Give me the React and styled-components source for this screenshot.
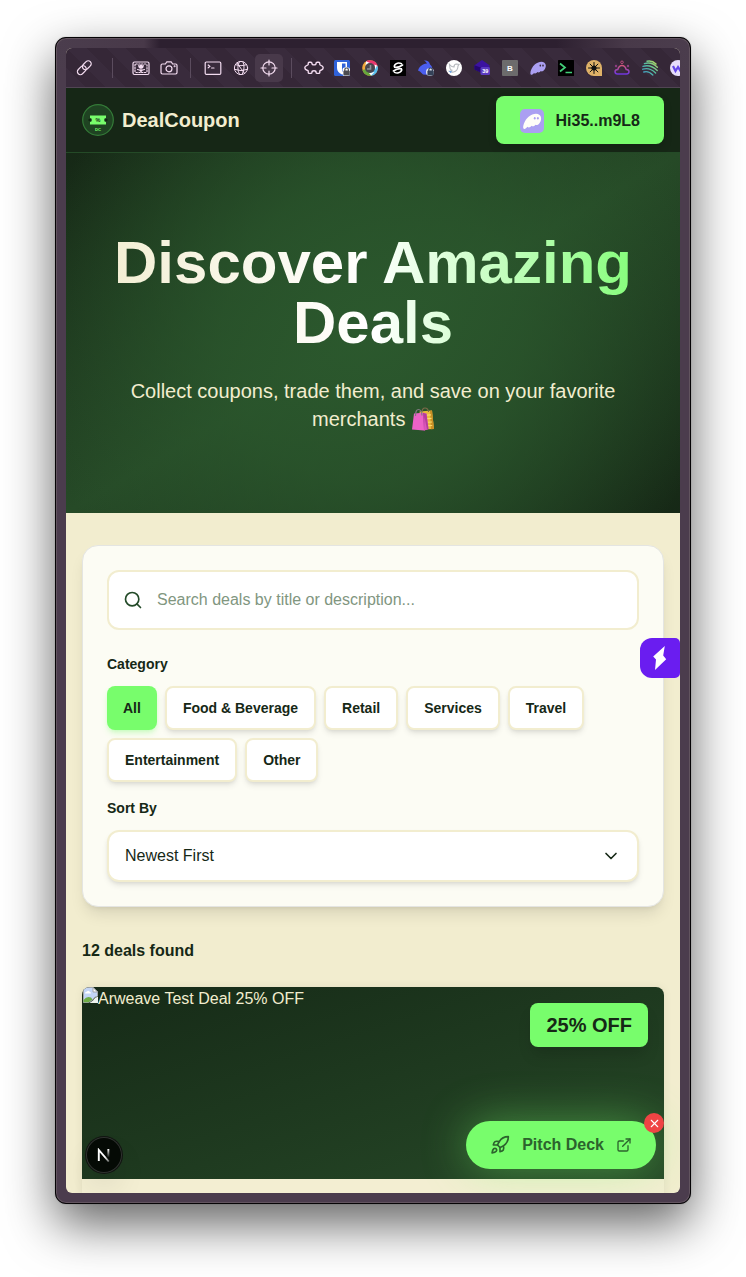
import React from "react";
import styled, { createGlobalStyle, css } from "styled-components";
import { Search, ChevronDown, Rocket, ExternalLink, X } from "lucide-react";

const GlobalStyle = createGlobalStyle`
  *, *::before, *::after { box-sizing: border-box; }
  html { background: #fff; }
  body {
    margin: 0;
    font-family: "Liberation Sans", Arial, Helvetica, sans-serif;
    font-size: 16px;
    line-height: 24px;
    color: #162816;
    overflow: hidden;
  }
  button, input { font: inherit; color: inherit; margin: 0; }
  svg { display: block; flex: none; }
`;

const Desktop = styled.main`
  height: 1277px;
  padding: 37px 55px;
  background: #fff;
  overflow: hidden;
`;

const Window = styled.div`
  width: 636px;
  height: 1167px;
  padding: 10px;
  border: 1px solid #050305;
  border-radius: 11px;
  background: linear-gradient(90deg, #4b3d4d 0, #483949 88px, #2d2030 104px, #2d2030 500px, #483949 570px, #4b3d4d 100%) 0 0 / 100% 30px no-repeat, #4b3c4d;
  box-shadow: inset 0 0 0 1px #62545f, 0 20px 50px rgba(0, 0, 0, 0.62), 0 0 1px rgba(0, 0, 0, 0.5);
  display: flex;
`;

const Viewport = styled.div`
  position: relative;
  flex: 1;
  display: flex;
  flex-direction: column;
  border-radius: 6px;
  overflow: hidden;
  background: #f2edcf;
`;

const Toolbar = styled.nav`
  flex: none;
  height: 40px;
  display: flex;
  align-items: center;
  padding-left: 4px;
  border-bottom: 1px solid #514554;
  background: repeating-linear-gradient(45deg, #392b3c 0 14px, #352737 14px 28px);
  color: #f3dcf0;
`;

const Tool = styled.div`
  flex: none;
  width: 28px;
  height: 28px;
  display: grid;
  place-items: center;
  border-radius: 5px;
  background: ${(p) => (p.$active ? "#48394a" : "transparent")};
`;

const ToolDivider = styled.i`
  flex: none;
  width: 1px;
  height: 20px;
  margin: 0 ${(p) => p.$after}px 0 ${(p) => p.$before}px;
  background: #5b4c5e;
`;

const Header = styled.header`
  flex: none;
  height: 65px;
  padding: 0 16px;
  display: flex;
  align-items: center;
  justify-content: space-between;
  background: #162716;
  border-bottom: 1px solid #244a27;
`;

const Brand = styled.div`
  display: flex;
  align-items: center;
  gap: 8px;
  font-size: 20px;
  line-height: 28px;
  font-weight: 700;
  color: #f2edcf;
`;

const WalletButton = styled.button`
  height: 48px;
  padding: 1px 24px 0;
  display: flex;
  align-items: center;
  gap: 12px;
  border: 0;
  border-radius: 8px;
  background: #78fd6c;
  color: #162816;
  font-weight: 700;
  white-space: nowrap;
  box-shadow: 0 4px 8px rgba(0, 0, 0, 0.15);
`;

const Hero = styled.section`
  flex: none;
  height: 360px;
  padding: 80px 16px;
  text-align: center;
  background:
    radial-gradient(circle at center, rgba(44, 90, 46, 0.9) 0, rgba(43, 88, 45, 0.72) 150px, rgba(42, 84, 43, 0) 345px),
    linear-gradient(to bottom right, #162816 0%, #264a27 50%, #162816 100%);
`;

const Title = styled.h1`
  margin: 0 0 24px;
  font-size: 60px;
  line-height: 60px;
  font-weight: 700;
  color: transparent;
  background: linear-gradient(90deg, #f2edcf, #ffffff 50%, #78fd6c);
  background-clip: text;
  -webkit-background-clip: text;
`;

const Lead = styled.p`
  margin: 0;
  font-size: 20px;
  line-height: 28px;
  color: #f2edcf;
`;

const NoBreak = styled.span`
  white-space: nowrap;
  svg { display: inline-block; vertical-align: -5px; margin: -4px -1px 0 0; }
`;

const Content = styled.section`
  flex: none;
  padding: 32px 16px 0;
`;

const FilterPanel = styled.section`
  height: 362px;
  padding: 24px;
  border: 1px solid #e4e5e2;
  border-radius: 16px;
  background: #fcfcf4;
  box-shadow: 0 10px 15px -3px rgba(0, 0, 0, 0.1), 0 4px 6px -4px rgba(0, 0, 0, 0.1);
`;

const fieldBox = css`
  display: flex;
  align-items: center;
  border: 2px solid #f2edcf;
  border-radius: 12px;
  background: #fff;
`;

const SearchField = styled.label`
  ${fieldBox}
  height: 60px;
  padding: 0 14px;
  gap: 14px;
  color: #234a28;
  margin-bottom: 24px;
`;

const SearchInput = styled.input`
  flex: 1;
  border: 0;
  outline: 0;
  padding: 0;
  background: transparent;
  &::placeholder { color: #81967f; opacity: 1; }
`;

const FieldLabel = styled.div`
  font-size: 14px;
  line-height: 20px;
  font-weight: 700;
  margin-bottom: 12px;
`;

const ChipRow = styled.div`
  display: flex;
  flex-wrap: wrap;
  gap: 8px;
  margin-bottom: 16px;
`;

const Chip = styled.button`
  height: 44px;
  padding: 0 16px;
  border: ${(p) => (p.$selected ? "0" : "2px solid #f2edcf")};
  border-radius: 8px;
  background: ${(p) => (p.$selected ? "#78fd6c" : "#fff")};
  color: #162816;
  font-size: 14px;
  line-height: 20px;
  font-weight: 700;
  white-space: nowrap;
  box-shadow: ${(p) =>
    p.$selected
      ? "0 4px 6px -1px rgba(120, 253, 108, 0.3), 0 2px 4px -2px rgba(120, 253, 108, 0.3)"
      : "0 4px 6px -1px rgba(0, 0, 0, 0.1), 0 2px 4px -2px rgba(0, 0, 0, 0.1)"};
`;

const SortSelect = styled.button`
  ${fieldBox}
  width: 100%;
  height: 52px;
  padding: 0 16px;
  justify-content: space-between;
  box-shadow: 0 4px 6px -1px rgba(0, 0, 0, 0.1), 0 2px 4px -2px rgba(0, 0, 0, 0.1);
`;

const ResultCount = styled.p`
  margin: 32px 0 24px;
  font-weight: 700;
`;

const DealCard = styled.article`
  height: 420px;
  border-radius: 8px;
  overflow: hidden;
  background: #f3eed2;
  box-shadow: 0 0 10px rgba(0, 0, 0, 0.07);
`;

const DealMedia = styled.div`
  position: relative;
  height: 192px;
  display: flex;
  align-items: flex-start;
  color: #f2edcf;
  background: linear-gradient(to bottom right, #162a17, #264827);
`;

const AltText = styled.span`
  line-height: 24px;
`;

const DiscountTag = styled.span`
  position: absolute;
  top: 16px;
  right: 16px;
  padding: 8px 16px;
  border-radius: 8px;
  background: #78fd6c;
  color: #162816;
  font-size: 20px;
  line-height: 28px;
  font-weight: 700;
  box-shadow: 0 10px 15px -3px rgba(0, 0, 0, 0.15);
`;

const SideTab = styled.button`
  position: absolute;
  right: 0;
  top: 590px;
  width: 40px;
  height: 40px;
  padding: 0;
  display: grid;
  place-items: center;
  border: 0;
  border-radius: 12px 5px 5px 12px;
  background: #6a1df0;
`;

const DevBadge = styled.div`
  position: absolute;
  left: 20px;
  bottom: 20px;
  width: 36px;
  height: 36px;
  display: grid;
  place-items: center;
  border-radius: 50%;
  background: #050a05;
  box-shadow: inset 0 0 0 1px #303330, 0 0 0 1px #121512, 0 16px 32px -8px rgba(0, 0, 0, 0.24);
`;

const PitchWrap = styled.div`
  position: absolute;
  right: 24px;
  bottom: 24px;
`;

const PitchButton = styled.button`
  height: 48px;
  padding: 0 24px;
  display: flex;
  align-items: center;
  gap: 12px;
  border: 0;
  border-radius: 24px;
  background: #78fd6c;
  color: #2c632d;
  font-weight: 700;
  white-space: nowrap;
  box-shadow: 0 0 46px rgba(120, 253, 108, 0.42);
`;

const Dismiss = styled.button`
  position: absolute;
  top: -8px;
  right: -8px;
  width: 20px;
  height: 20px;
  padding: 0;
  display: grid;
  place-items: center;
  border: 0;
  border-radius: 50%;
  background: #ef4444;
  color: #fff;
`;

const Glyph = ({ size = 18, children }) => (
  <svg width={size} height={size} viewBox="0 0 18 18" fill="none" stroke="currentColor" strokeWidth="1.2" strokeLinecap="round" strokeLinejoin="round">
    {children}
  </svg>
);

const Favicon = ({ children }) => (
  <svg width="16" height="16" viewBox="0 0 16 16">{children}</svg>
);

const LinkIcon = () => (
  <Glyph>
    <rect x="-5" y="-3" width="10" height="6" rx="3" transform="translate(11.800 6.200) rotate(-45)" />
    <rect x="-5" y="-3" width="10" height="6" rx="3" transform="translate(6.800 11.200) rotate(-45)" />
  </Glyph>
);

const PictureIcon = () => (
  <Glyph>
    <rect x="1" y="3" width="16" height="12.5" rx="1.5" />
    <rect x="3" y="5" width="12" height="8.5" rx="1" strokeDasharray="1.3 1.5" />
    <path d="M9 10v3M5.5 10.5q2.5 0 3.5 2q1-2 3.5-2" />
    <path d="M6.2 5.5l1.4 1L9 5.2l1.4 1.3 1.4-1q.3 4.2-2.8 4.2T6.2 5.5z" fill="currentColor" stroke="none" />
  </Glyph>
);

const CameraIcon = () => (
  <Glyph>
    <path d="M2.400 5h3l1.400-2.200h4.400L12.600 5h3q1.400 0 1.400 1.400v7.200q0 1.400-1.400 1.400H2.400Q1 15 1 13.600V6.400Q1 5 2.400 5z" />
    <circle cx="9" cy="9.800" r="3" />
    <circle cx="14.600" cy="7.200" r=".4" />
  </Glyph>
);

const TerminalIcon = () => (
  <Glyph>
    <rect x="1.200" y="3" width="15.600" height="12.400" rx="1.200" />
    <path d="M4.200 6l1.800 1.400L4.200 8.800M7.600 9h2.400" />
  </Glyph>
);

const GlobeIcon = () => (
  <Glyph>
    <g strokeWidth="1">
      <circle cx="9" cy="9" r="6.600" />
      <path d="M3.400 5.800q5.600 2 11.200 0M2.600 10.400q6.400 2.600 12.800 0M7.400 2.600q-3.200 6 0 12.800M11 2.800q2.600 6-.8 12.400M5 4l7.600 10.500" />
    </g>
  </Glyph>
);

const CrosshairIcon = () => (
  <Glyph>
    <circle cx="9" cy="9" r="6.200" />
    <path d="M9 1v5M9 12v5M1 9h5M12 9h5" />
  </Glyph>
);

const PuzzleIcon = () => (
  <svg width="20" height="16" viewBox="0 0 20 16" fill="none" stroke="currentColor" strokeWidth="1.400" strokeLinejoin="round">
    <path d="M5.200 2.200H6.800Q7.900 2.200 7.900 3.200C7.900 5.400 12.100 5.400 12.100 3.200Q12.100 2.200 13.200 2.200H14.600Q15.800 2.200 15.800 3.400V4.600C15.800 5.800 19.200 4.900 19.200 7.800S15.800 9.800 15.800 11V12.200Q15.800 13.400 14.600 13.400H13.200Q12.100 13.400 12.100 12.400C12.100 10.200 7.900 10.200 7.900 12.400Q7.900 13.400 6.800 13.400H5.400Q4.200 13.400 4.200 12.200V11C4.200 9.800 .8 10.700 .8 7.800S4.200 5.800 4.200 4.600V3.400Q4.200 2.200 5.200 2.200Z" />
  </svg>
);

const ShoppingBags = () => (
  <svg width="24" height="24" viewBox="0 0 24 24" role="img" aria-label="shopping bags">
    <path d="M8.500 4.500L21 3.500l2 18.500-12 .5z" fill="#e9b93b" />
    <path d="M19 3.700l2-.2 2 18.500-3 .2z" fill="#c98f25" />
    <path d="M9 8.500l11-.6M9 12l11.500-.6M12 15.500l9-.5M12 19l9.200-.5" stroke="#f7dc6f" strokeWidth="1.200" />
    <path d="M11 5.500Q11 1 14 1t3.600 4" fill="none" stroke="#7c6a4a" strokeWidth="1.100" />
    <path d="M3 6.500l9-.7 3.500.9L17.500 22l-4.500 1.500L1 22.500z" fill="#ec62c6" />
    <path d="M12 5.800l3.500.9L17.500 22 13 23.500z" fill="#b53c9c" />
    <path d="M13.500 10L16 22.500 13 23.500z" fill="#db56b9" />
    <path d="M4.500 9Q4.500 2.500 7.500 2.500T11 8.500" fill="none" stroke="#817a80" strokeWidth="1.200" />
  </svg>
);

const Padlock = ({ color }) => (
  <g>
    <path d="M10.800 11V9.800a1.800 1.800 0 0 1 3.600 0V11" fill="none" stroke={color} strokeWidth="1.200" />
    <rect x="9.400" y="10.600" width="6.400" height="4.800" rx="1" fill={color} />
  </g>
);

const GhostShape = ({ fill, eye }) => (
  <g>
    <path d="M.8 14.600C-.6 13.500 1.400 7.200 5 4.300 8.200 1.700 12.200 1 14.400 2.700c2.200 1.800 1.600 5.200-.2 7.400-1.100 1.300-2.500 1.700-3.400 1-.7 1.200-2.200 2-3.300 1-1 1.300-2.600 1.800-3.500.8-.9 1-2.300 2.400-3.200 1.700z" fill={fill} />
    <ellipse cx="10.300" cy="5.600" rx=".8" ry="1.100" fill={eye} />
    <ellipse cx="13" cy="5.600" rx=".8" ry="1.100" fill={eye} />
  </g>
);

const extensions = [
  <Favicon key="shield">
    <rect width="16" height="16" rx="1.500" fill="#2f62d9" />
    <path d="M3 2h10v6q0 4-5 6.500Q3 12 3 8z" fill="#fff" />
    <path d="M8 3.500h3.500V8q0 2-3.500 4z" fill="#2f62d9" />
    <rect x="8.500" y="7.500" width="7.500" height="8.500" rx="2" fill="#fff" />
    <Padlock color="#4b4b50" />
  </Favicon>,
  <Favicon key="lens">
    <circle cx="8" cy="8" r="7.800" fill="#f2a93b" />
    <path d="M4 1.300A7.800 7.800 0 0 1 15.600 6L8 8z" fill="#e9366f" />
    <path d="M15.600 6A7.800 7.800 0 0 1 9 15.800L8 8z" fill="#55bdf0" />
    <path d="M9 15.800A7.800 7.800 0 0 1 .5 10L8 8z" fill="#67a83c" />
    <path d="M4 1.300L8 3 3.500 5.500zM12.500 4.500l2.500 1-2 4zM12.500 12L7 13l2 2.500z" fill="#fff" />
    <circle cx="8" cy="8" r="5" fill="#4a474e" />
    <path d="M8.500 5v4H5" fill="none" stroke="#8f9499" strokeWidth="1.600" />
  </Favicon>,
  <Favicon key="swirl">
    <rect width="16" height="16" fill="#000" />
    <g fill="none" stroke="#fff" strokeWidth="1.600" strokeLinecap="round">
      <path d="M11.500 3.600Q8.500 2.200 6 3.800 3.600 5.600 4.600 7.200 8 8 12.600 5" />
      <path d="M4.500 12.400Q7.500 13.800 10 12.200 12.400 10.400 11.400 8.800 8 8 3.400 11" />
    </g>
  </Favicon>,
  <Favicon key="rabbit">
    <path d="M6 .5q5-.5 6 4 3 2 2 6l-3 4.500-6-.5-3-3-2-1q1-4 5-6 2-1 4-1Q8 1.500 6 .5z" fill="#4b5ff0" />
    <circle cx="12" cy="12" r="4" fill="#dfe3ef" />
    <Padlock color="#344158" />
  </Favicon>,
  <Favicon key="bird">
    <circle cx="8" cy="8" r="8" fill="#fff" />
    <path d="M3.500 4.500q2 2.500 4.500 2.500 0-3 2.500-3l2.500.5-1 1.500q0 5-4.500 6-2 .4-4-.8 1.500 0 2.500-1-2-.5-2-2l-.5-3.700z" fill="none" stroke="#b4b8bd" strokeWidth="1.100" />
    <path d="M3 11l3 .5-1.500 1.500z" fill="#5498ec" />
  </Favicon>,
  <Favicon key="cube">
    <path d="M8 0l7.500 5.200V10L8 13 .5 9.500V5.200z" fill="#3b12a0" />
    <path d="M.5 5.200L8 8v5L.5 9.500z" fill="#250770" />
    <rect x="6.500" y="7" width="9.500" height="8" rx="1.500" fill="#5c3bc0" />
    <text x="11.200" y="13" textAnchor="middle" fontSize="5.500" fontWeight="700" fill="#fff" fontFamily="Liberation Sans, sans-serif">39</text>
  </Favicon>,
  <Favicon key="letter">
    <rect width="16" height="16" rx="1" fill="#6c6b6c" />
    <text x="8" y="11" textAnchor="middle" fontSize="8" fontWeight="700" fill="#fff" fontFamily="Liberation Sans, sans-serif">B</text>
  </Favicon>,
  <Favicon key="ghost"><GhostShape fill="#ab9ff2" eye="#3a2b3b" /></Favicon>,
  <Favicon key="prompt">
    <rect width="16" height="16" rx=".5" fill="#000" />
    <path d="M2 3.500l5 4-5 4M7.500 12.500H14" fill="none" stroke="#42d078" strokeWidth="1.700" />
  </Favicon>,
  <Favicon key="sun">
    <path d="M8 0a8 8 0 0 1 8 8v8H8A8 8 0 0 1 8 0z" fill="#dfb268" />
    <g stroke="#111" strokeWidth="1" strokeLinecap="round">
      <path d="M8 2.500v11M2.500 8h11M4.100 4.100l7.800 7.800M11.900 4.100l-7.800 7.800" />
    </g>
    <circle cx="8" cy="8" r="2.600" fill="#111" />
  </Favicon>,
  <Favicon key="cloud">
    <defs><linearGradient id="cloud" x1="0" y1="0" x2="0" y2="1"><stop stopColor="#d2577c" /><stop offset="1" stopColor="#6e35df" /></linearGradient></defs>
    <path d="M3.500 14Q1 14 1 11.800T3.800 9.500Q5 5.500 8 5.500t4.200 4Q15 9.600 15 11.800T12.500 14z" fill="none" stroke="url(#cloud)" strokeWidth="1.500" />
    <circle cx="8" cy="2.300" r="1.300" fill="none" stroke="#b84b7c" />
    <circle cx="2" cy="6" r="1.200" fill="#8e3d82" />
    <circle cx="14" cy="6" r="1.200" fill="#8e3d82" />
  </Favicon>,
  <Favicon key="waves">
    <defs><linearGradient id="waves" x1="1" y1="0" x2="0" y2="1"><stop stopColor="#c7e255" /><stop offset=".5" stopColor="#55bda0" /><stop offset="1" stopColor="#3b91c9" /></linearGradient></defs>
    <g fill="none" stroke="url(#waves)" strokeWidth="1.400" strokeLinecap="round">
      <path d="M5 1.200Q10 0 14 4M2.400 3.600Q9.500 1.500 15.300 7.200M1 6.400Q8.500 4 15.200 10.600M.8 9.200Q7.500 7 13.600 13M1.800 12Q6.500 10.500 10.800 15" />
    </g>
  </Favicon>,
  <Favicon key="wallet">
    <circle cx="8" cy="8" r="8" fill="#e7ddfb" />
    <path d="M3 6l2.500 5L8 7l2.500 4L13 6" fill="none" stroke="#6547e8" strokeWidth="2.200" />
  </Favicon>,
];

const BrandLogo = () => (
  <svg width="32" height="32" viewBox="0 0 32 32">
    <circle cx="16" cy="16" r="15.300" fill="#1f4322" stroke="#347b38" strokeWidth="1.200" />
    <path d="M8 11.500h16v2.600a1.900 1.900 0 0 0 0 3.800v2.600H8v-2.600a1.900 1.900 0 0 0 0-3.800z" fill="#78fd6c" />
    <circle cx="7.700" cy="16" r="1.300" fill="#102412" />
    <circle cx="24.300" cy="16" r="1.300" fill="#102412" />
    <text x="16" y="18" textAnchor="middle" fontSize="5.500" fontWeight="700" fill="#162816" fontFamily="Liberation Sans, sans-serif">%</text>
    <text x="16" y="27" textAnchor="middle" fontSize="4.200" fontWeight="700" fill="#78fd6c" fontFamily="Liberation Sans, sans-serif">DC</text>
  </svg>
);

const WalletLogo = () => (
  <svg width="24" height="24" viewBox="0 0 24 24">
    <rect width="24" height="24" rx="5" fill="#ab9ff2" />
    <g transform="translate(2.800 2.800) scale(1.160)"><GhostShape fill="#fffdf8" eye="#ab9ff2" /></g>
  </svg>
);

const BoltIcon = () => (
  <svg width="16" height="24" viewBox="0 0 16 24" fill="#fff">
    <path d="M12.800 0L1.200 10.400 4 13.500 3 24 14.200 13.300 11.200 9.600z" />
  </svg>
);

const NextMark = () => (
  <svg width="14" height="14" viewBox="0 0 14 14" fill="none">
    <defs>
      <linearGradient id="stem" x1="0" y1="0" x2="0" y2="1"><stop stopColor="#fff" /><stop offset="1" stopColor="#fff" stopOpacity="0" /></linearGradient>
      <linearGradient id="diagonal" x1="0" y1="0" x2="1" y2="1"><stop offset=".6" stopColor="#fff" /><stop offset="1" stopColor="#fff" stopOpacity=".4" /></linearGradient>
    </defs>
    <path d="M1.800 13V2L11.800 13.500" stroke="url(#diagonal)" strokeWidth="1.900" />
    <rect x="10.400" y="1" width="1.900" height="8.500" fill="url(#stem)" />
  </svg>
);

const BrokenImage = () => (
  <svg width="16" height="16" viewBox="0 0 16 16">
    <path d="M1.500 .5H11L15.500 5v4l-3 1.500-2 2.500-4 2.500H1.500z" fill="#c3d5f6" stroke="#a3a6aa" />
    <path d="M11 .5V5h4.500z" fill="#fff" stroke="#a3a6aa" />
    <path d="M3 6.500q0-2 2-2 1-1.500 2.500 0 1.500.3 1.500 2z" fill="#fff" />
    <path d="M1.500 13Q5 8.500 9 10.500l1.500 2-4 2.800h-5z" fill="#6fae47" />
    <path d="M16 9.500v6.500H7.500l3.500-2.500 2-2.500z" fill="#eef2ee" />
  </svg>
);

const categories = ["All", "Food & Beverage", "Retail", "Services", "Travel", "Entertainment", "Other"];

export default function App() {
  return (
    <>
      <GlobalStyle />
      <Desktop>
        <Window>
          <Viewport>
            <Toolbar>
              <Tool><LinkIcon /></Tool>
              <ToolDivider $before={14} $after={14} />
              <Tool><PictureIcon /></Tool>
              <Tool><CameraIcon /></Tool>
              <ToolDivider $before={7} $after={8} />
              <Tool><TerminalIcon /></Tool>
              <Tool><GlobeIcon /></Tool>
              <Tool $active><CrosshairIcon /></Tool>
              <ToolDivider $before={8} $after={8} />
              <Tool><PuzzleIcon /></Tool>
              {extensions.map((icon) => <Tool key={icon.key}>{icon}</Tool>)}
            </Toolbar>
            <Header>
              <Brand><BrandLogo />DealCoupon</Brand>
              <WalletButton><WalletLogo />Hi35..m9L8</WalletButton>
            </Header>
            <Hero>
              <Title>Discover Amazing Deals</Title>
              <Lead>
                Collect coupons, trade them, and save on your favorite{" "}
                <NoBreak>merchants <ShoppingBags /></NoBreak>
              </Lead>
            </Hero>
            <Content>
              <FilterPanel>
                <SearchField>
                  <Search size={20} strokeWidth={2} />
                  <SearchInput placeholder="Search deals by title or description..." />
                </SearchField>
                <FieldLabel>Category</FieldLabel>
                <ChipRow>
                  {categories.map((name, i) => <Chip key={name} $selected={i === 0}>{name}</Chip>)}
                </ChipRow>
                <FieldLabel>Sort By</FieldLabel>
                <SortSelect>Newest First<ChevronDown size={20} strokeWidth={2} /></SortSelect>
              </FilterPanel>
              <ResultCount>12 deals found</ResultCount>
              <DealCard>
                <DealMedia>
                  <BrokenImage />
                  <AltText>Arweave Test Deal 25% OFF</AltText>
                  <DiscountTag>25% OFF</DiscountTag>
                </DealMedia>
              </DealCard>
            </Content>
            <SideTab aria-label="Open panel"><BoltIcon /></SideTab>
            <DevBadge><NextMark /></DevBadge>
            <PitchWrap>
              <PitchButton><Rocket size={20} />Pitch Deck<ExternalLink size={16} /></PitchButton>
              <Dismiss aria-label="Dismiss"><X size={13} /></Dismiss>
            </PitchWrap>
          </Viewport>
        </Window>
      </Desktop>
    </>
  );
}
